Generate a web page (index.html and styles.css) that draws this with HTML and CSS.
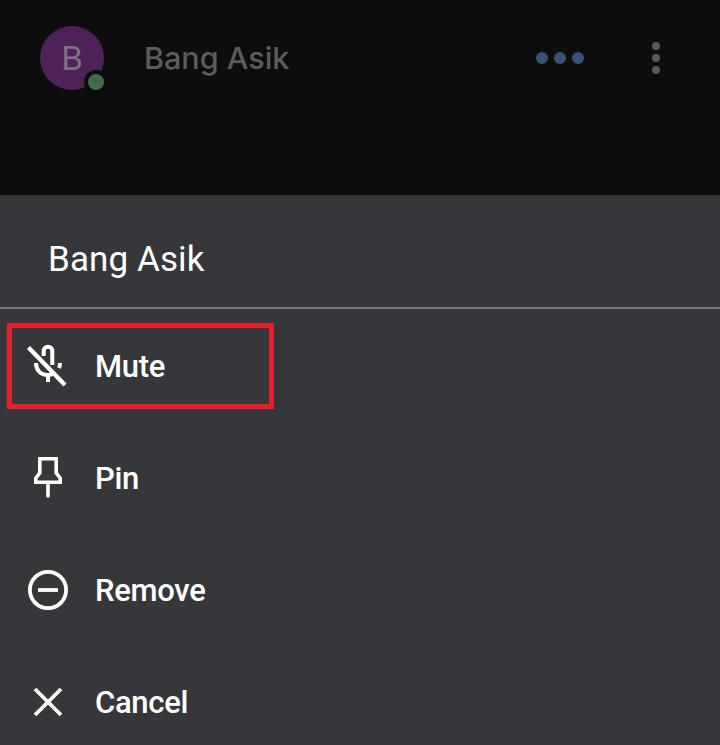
FILE: index.html
```html
<!DOCTYPE html>
<html lang="en">
<head>
<meta charset="utf-8">
<title>Participant menu</title>
<link rel="stylesheet" href="styles.css">
</head>
<body>
<div class="screen">
  <header class="participant">
    <div class="avatar">
      <span class="avatar-letter">B</span>
      <span class="presence"></span>
    </div>
    <span class="participant-name">Bang Asik</span>
    <div class="speaking">
      <span class="speaking-dot"></span><span class="speaking-dot"></span><span class="speaking-dot"></span>
    </div>
    <div class="more">
      <span class="more-dot"></span><span class="more-dot"></span><span class="more-dot"></span>
    </div>
  </header>
  <section class="sheet">
    <h1 class="sheet-title">Bang Asik</h1>
    <ul class="menu">
      <li class="menu-item">
        <svg class="icon" viewBox="0 0 48 48" fill="none" stroke="#fff" stroke-width="4">
          <path d="M19.700 14V9a4.300 4.300 0 0 1 8.600 0V23"/>
          <path d="M12 21c0 7 4.500 12 12 12 1.500 0 3-.3 4.500-1M35 26c.7-1.500 1-3.500 1-5"/>
          <path d="M24 33v7"/>
          <path d="M4.500 5.500L41 43" stroke-width="4.400"/>
        </svg>
        <span class="menu-label">Mute</span>
      </li>
      <li class="menu-item">
        <svg class="icon" viewBox="0 0 48 48" fill="none" stroke="#fff" stroke-width="3.600">
          <path d="M15.800 4.800h16.400v14l4 5.500v4H11.800v-4l4-5.500z"/>
          <path d="M24 30v12" stroke-linecap="round"/>
        </svg>
        <span class="menu-label">Pin</span>
      </li>
      <li class="menu-item">
        <svg class="icon" viewBox="0 0 48 48" fill="none" stroke="#fff" stroke-width="3.800">
          <circle cx="24" cy="24" r="18.100"/>
          <path d="M14 24h20"/>
        </svg>
        <span class="menu-label">Remove</span>
      </li>
      <li class="menu-item">
        <svg class="icon" viewBox="0 0 48 48" fill="none" stroke="#fff" stroke-width="3.800">
          <path d="M11 11l26 26M37 11L11 37"/>
        </svg>
        <span class="menu-label">Cancel</span>
      </li>
    </ul>
    <div class="highlight"></div>
  </section>
</div>
</body>
</html>
```

FILE: styles.css
```css
* {
  box-sizing: border-box;
}

html,
body {
  margin: 0;
  padding: 0;
}

body {
  background: #0d0d0e;
  font-family: Roboto, "Liberation Sans", sans-serif;
  overflow: hidden;
}

.screen {
  width: 720px;
  height: 745px;
  display: flex;
  flex-direction: column;
  overflow: hidden;
}

.participant {
  height: 195px;
  flex: none;
  display: flex;
  align-items: flex-start;
  padding: 26px 0 0 40px;
  background: #0d0d0e;
}

.avatar {
  position: relative;
  width: 64px;
  height: 64px;
  flex: none;
  border-radius: 50%;
  background: #4e2159;
  display: flex;
  align-items: center;
  justify-content: center;
}

.avatar-letter {
  color: #7f7184;
  font-family: Inter, Roboto, sans-serif;
  font-size: 33px;
  line-height: 64px;
}

.presence {
  position: absolute;
  left: 44px;
  top: 44px;
  width: 24px;
  height: 24px;
  border-radius: 50%;
  background: #426b4c;
  border: 4px solid #0d0d0e;
}

.participant-name {
  margin-left: 40px;
  width: 392px;
  flex: none;
  color: #5c5c5f;
  font-family: Inter, Roboto, sans-serif;
  font-size: 30.5px;
  font-weight: 500;
  line-height: 64px;
}

.speaking {
  display: flex;
  gap: 6px;
  height: 12px;
  margin-top: 26px;
  flex: none;
}

.speaking-dot {
  width: 12px;
  height: 12px;
  border-radius: 50%;
  background: #3b5075;
}

.more {
  margin: 16px 0 0 68px;
  display: flex;
  flex-direction: column;
  gap: 4px;
  flex: none;
}

.more-dot {
  width: 8px;
  height: 8px;
  border-radius: 50%;
  background: #5a5a5c;
}

.sheet {
  position: relative;
  flex: 1;
  background: #36373a;
}

.sheet-title {
  margin: 0;
  height: 114px;
  padding: 0 0 0 48px;
  border-bottom: 2px solid #77787b;
  color: #fff;
  font-size: 35px;
  font-weight: 400;
  letter-spacing: 0.1px;
  line-height: 130px;
}

.menu {
  list-style: none;
  margin: 0;
  padding: 1px 0 0;
}

.menu-item {
  height: 112px;
  display: flex;
  align-items: center;
  padding-left: 24px;
  gap: 23px;
}

.icon {
  width: 48px;
  height: 48px;
  flex: none;
}

.menu-label {
  color: #fff;
  font-size: 31px;
  font-weight: 500;
  letter-spacing: -0.3px;
  line-height: 36px;
  margin-top: 2px;
}

.highlight {
  position: absolute;
  left: 7px;
  top: 128px;
  width: 267px;
  height: 86px;
  border: 5px solid #e51f2b;
}
```
